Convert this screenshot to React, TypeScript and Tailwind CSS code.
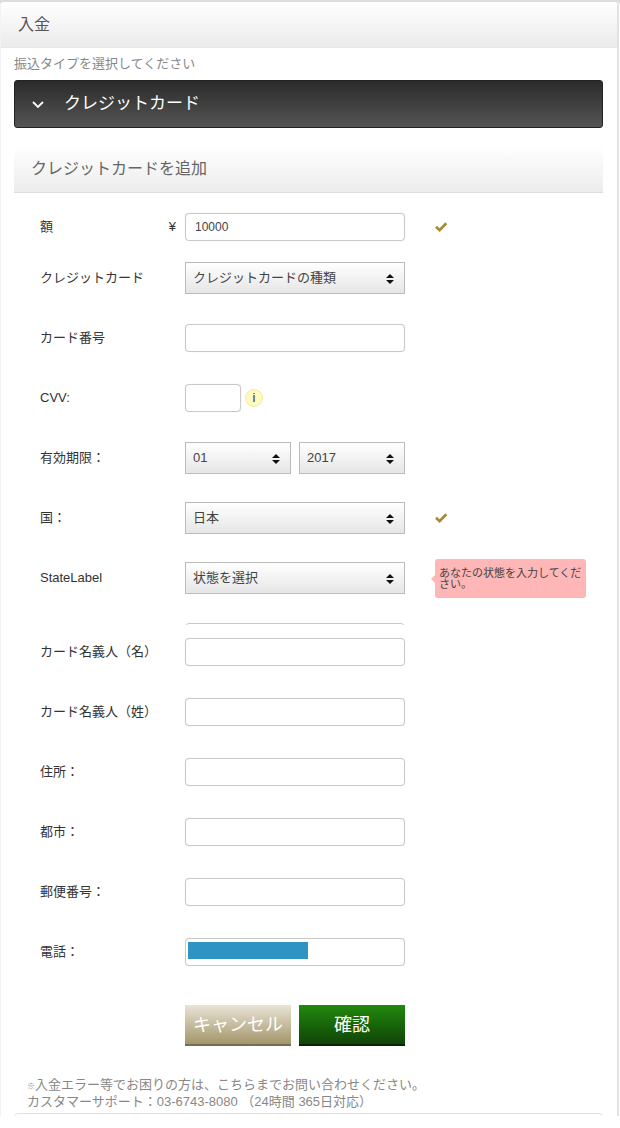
import type { ReactNode } from 'react';

const months = ['01', '02', '03', '04', '05', '06', '07', '08', '09', '10', '11', '12'];
const years = ['2017', '2018', '2019', '2020', '2021', '2022'];

const inputClass =
  'h-7 rounded-[4px] border border-[#c9c9c9] bg-white px-[9px] text-xs text-[#444] shadow-[0_0_1px_#ddd] outline-none focus:border-[#999]';

const CheckIcon = () => (
  <svg width="13" height="11" viewBox="0 0 13 11" aria-hidden="true">
    <path d="M1 4.8 4.6 8.2 11.3 1.2" fill="none" stroke="#a38c34" strokeWidth="2.7" />
  </svg>
);

type RowProps = {
  id: string;
  label: string;
  prefix?: string;
  className?: string;
  after?: ReactNode;
  children: ReactNode;
};

const Row = ({ id, label, prefix, className = 'mb-[10px]', after, children }: RowProps) => (
  <div className={`flex h-[50px] items-center ${className}`}>
    <div className="flex w-[145px] shrink-0 items-center justify-between pr-[9px]">
      <label htmlFor={id} className="whitespace-nowrap">
        {label}
      </label>
      {prefix && <span>{prefix}</span>}
    </div>
    <div className="flex w-[220px] shrink-0 items-center">{children}</div>
    {after && <div className="ml-[30px]">{after}</div>}
  </div>
);

type SelectProps = {
  id: string;
  options: string[];
  label?: string;
};

const Select = ({ id, options, label }: SelectProps) => (
  <div className="relative flex-1">
    <select
      id={id}
      aria-label={label}
      className="block h-8 w-full appearance-none border border-[#bbb] bg-linear-to-b from-white to-[#e6e6e6] pr-6 pl-[7px] text-[13px] text-[#444] outline-none"
    >
      {options.map((option) => (
        <option key={option}>{option}</option>
      ))}
    </select>
    <svg
      className="pointer-events-none absolute top-3 right-[11px]"
      width="8"
      height="10"
      viewBox="0 0 8 10"
      aria-hidden="true"
    >
      <path d="M4 0 8 4H0ZM0 6H8L4 10Z" fill="#111" />
    </svg>
  </div>
);

const TextRow = ({ id, label }: { id: string; label: string }) => (
  <Row id={id} label={label}>
    <input id={id} type="text" className={`${inputClass} w-full`} />
  </Row>
);

const App = () => {
  return (
    <main className="bg-[#ddd] pt-[2px] font-['Liberation_Sans','Noto_Sans_CJK_JP',sans-serif] text-[13px] text-[#333]">
      <div className="rounded-t-[4px] bg-white pr-px">
        <div className="rounded-t-[4px] border-r-2 border-l border-r-[#e2e2e2] border-l-[#f2f2f2]">
          <header className="flex h-[46px] items-center rounded-t-[4px] border-b border-[#e6e6e6] bg-linear-to-b from-white to-[#ebebeb] px-[17px]">
            <h1 className="text-base text-[#555]">入金</h1>
          </header>

          <div className="pr-[14px] pl-[13px]">
            <p className="flex h-8 items-center text-[#888]">振込タイプを選択してください</p>

            <button
              type="button"
              className="flex h-12 w-full items-center rounded-[3px] border border-[#222] bg-linear-to-b from-[#2b2b2b] to-[#555] pl-[17px] text-[17px] text-white"
            >
              <svg width="12" height="8" viewBox="0 0 12 8" aria-hidden="true">
                <path d="m1 2 5 5 5-5" fill="none" stroke="#fff" strokeWidth="1.8" />
              </svg>
              <span className="ml-5">クレジットカード</span>
            </button>

            <section className="mt-[18px]">
              <h2 className="flex h-[47px] items-center border-b border-[#ddd] bg-linear-to-b from-white to-[#ececec] px-[17px] text-base text-[#666]">
                クレジットカードを追加
              </h2>

              <form className="pt-[9px]" onSubmit={(e) => e.preventDefault()}>
                <div className="pl-[26px]">
                  <Row id="amount" label="額" prefix="¥" className="mb-px" after={<CheckIcon />}>
                    <input
                      id="amount"
                      type="text"
                      defaultValue="10000"
                      className={`${inputClass} w-full`}
                    />
                  </Row>
                  <Row id="card-type" label="クレジットカード">
                    <Select
                      id="card-type"
                      options={['クレジットカードの種類', 'Visa', 'MasterCard', 'JCB']}
                    />
                  </Row>
                  <TextRow id="card-number" label="カード番号" />
                  <Row id="cvv" label="CVV:">
                    <input id="cvv" type="text" className={`${inputClass} w-14`} />
                    <span className="ml-1 flex size-[18px] items-center justify-center rounded-full border border-[#f5eba0] bg-[#fffac0]">
                      i
                    </span>
                  </Row>
                  <Row id="month" label="有効期限：">
                    <div className="flex w-full gap-2">
                      <Select id="month" options={months} />
                      <Select id="year" label="年" options={years} />
                    </div>
                  </Row>
                  <Row id="country" label="国：" after={<CheckIcon />}>
                    <Select id="country" options={['日本', '中国', '韓国']} />
                  </Row>
                  <Row
                    id="state"
                    label="StateLabel"
                    after={
                      <div
                        role="alert"
                        className="relative w-[151px] rounded-[3px] bg-[#ffb6b6] px-1 pt-[9px] pb-2 text-[11px] leading-[11px] text-[#444]"
                      >
                        <svg
                          className="absolute top-4 -left-1"
                          width="4"
                          height="8"
                          viewBox="0 0 4 8"
                          aria-hidden="true"
                        >
                          <path d="M4 0v8L0 4Z" fill="#ffb6b6" />
                        </svg>
                        あなたの状態を入力してください。
                      </div>
                    }
                  >
                    <Select id="state" options={['状態を選択']} />
                  </Row>

                  {/* Collapsed free-text state field, only its top edge is left */}
                  <div className="h-[14px] pt-[10px] pl-[145px]">
                    <div className="h-[2px] w-[220px] overflow-hidden">
                      <div className="h-7 rounded-[4px] border border-[#c9c9c9]" />
                    </div>
                  </div>

                  <TextRow id="first-name" label="カード名義人（名）" />
                  <TextRow id="last-name" label="カード名義人（姓）" />
                  <TextRow id="address" label="住所：" />
                  <TextRow id="city" label="都市：" />
                  <TextRow id="zip" label="郵便番号：" />
                  <Row id="phone" label="電話：">
                    <div className="relative w-full">
                      <input id="phone" type="tel" className={`${inputClass} block w-full`} />
                      <span className="pointer-events-none absolute top-1 left-[3px] h-[17px] w-[120px] bg-[#2f94c4]" />
                    </div>
                  </Row>

                  <div className="flex gap-2 pt-[18px] pl-[145px] text-lg text-white">
                    <button
                      type="button"
                      className="h-[41px] w-[106px] border-b-2 border-[#776c58] bg-linear-to-b from-[#e9e4d6] to-[#a4966a] whitespace-nowrap"
                    >
                      キャンセル
                    </button>
                    <button
                      type="submit"
                      className="h-[41px] w-[106px] border-b-2 border-[#0a2405] bg-linear-to-b from-[#218a0b] to-[#104508] whitespace-nowrap"
                    >
                      確認
                    </button>
                  </div>
                </div>
              </form>
            </section>

            <footer className="pt-[30px] pl-[13px] leading-[17px] text-[#888]">
              <p>
                <span className="text-[8px] leading-none">※</span>
                入金エラー等でお困りの方は、こちらまでお問い合わせください。
              </p>
              <p>カスタマーサポート：03-6743-8080 （24時間 365日対応）</p>
            </footer>
            <div className="mt-[3px] h-[3px] overflow-hidden">
              <div className="h-6 rounded-[4px] border border-[#e2e2e2]" />
            </div>
          </div>
        </div>
      </div>
    </main>
  );
};

export default App;
